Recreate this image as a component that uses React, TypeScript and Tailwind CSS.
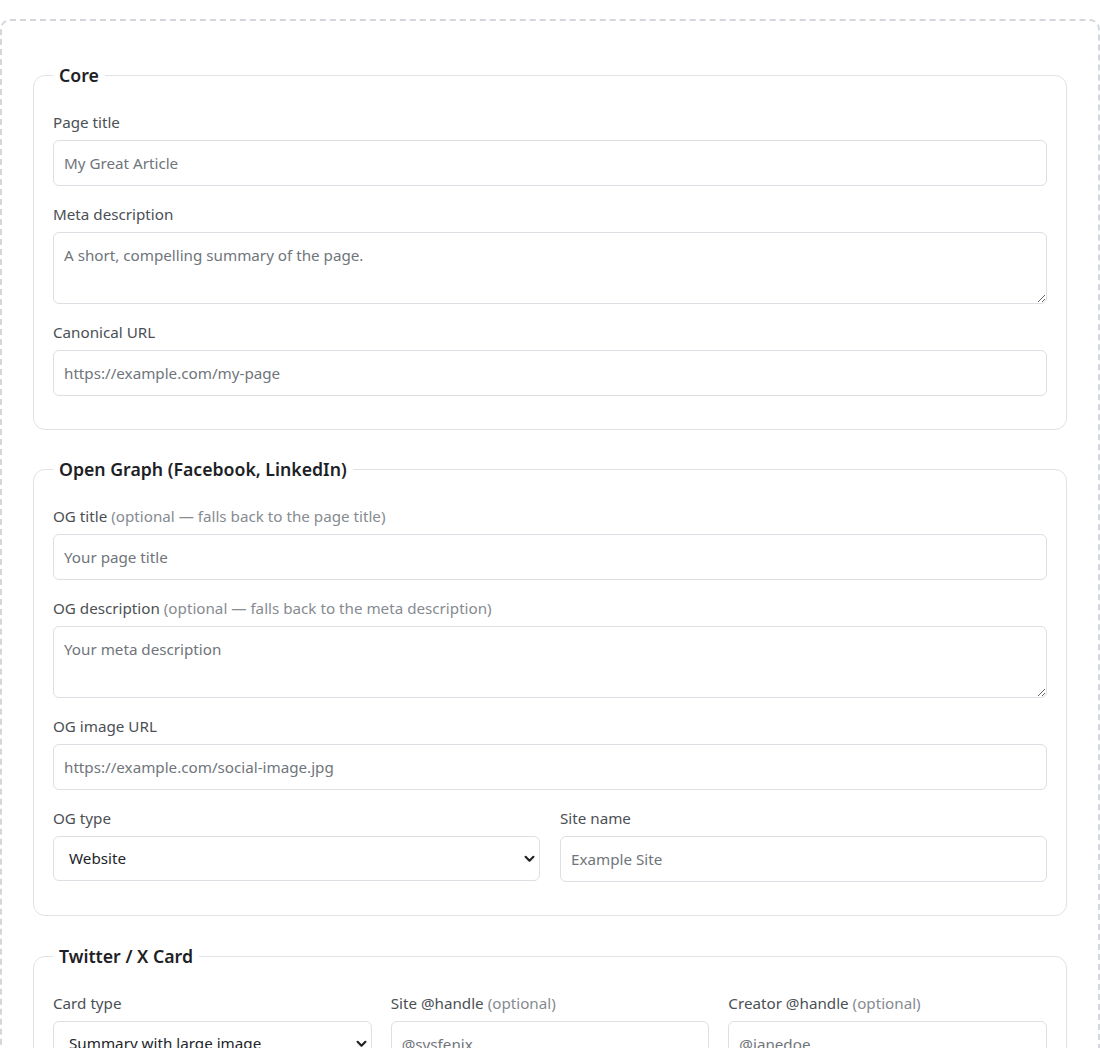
import React from "react";

const font = { fontFamily: '"Noto Sans", "Open Sans", sans-serif' };

function Label({ text, hint }: { text: string; hint?: string }) {
  return (
    <label className="block text-[15.2px] leading-[20px] text-[#4b5055] mb-[8px]">
      {text}
      {hint ? <span className="text-[#868b91]"> {hint}</span> : null}
    </label>
  );
}

function TextInput({ placeholder }: { placeholder: string }) {
  return (
    <input
      type="text"
      placeholder={placeholder}
      className="block w-full h-[46px] rounded-[6px] border border-[#dcdfe3] bg-white px-[10px] text-[15.2px] text-[#212529] placeholder:text-[#6f757b] outline-none"
    />
  );
}

function TextArea({ placeholder }: { placeholder: string }) {
  return (
    <textarea
      placeholder={placeholder}
      className="block w-full h-[72px] rounded-[6px] border border-[#dcdfe3] bg-white px-[10px] py-[11px] text-[15.2px] leading-[22px] text-[#212529] placeholder:text-[#6f757b] outline-none resize-y"
    />
  );
}

function Select({ value, options }: { value: string; options: string[] }) {
  return (
    <div className="relative">
      <select
        defaultValue={value}
        className="block w-full h-[45px] appearance-none rounded-[6px] border border-[#dcdfe3] bg-white pl-[15px] pr-[36px] text-[15.2px] text-[#212529] outline-none"
      >
        {options.map((o) => (
          <option key={o}>{o}</option>
        ))}
      </select>
      <svg
        className="pointer-events-none absolute right-[5px] top-1/2 -translate-y-1/2"
        width="11"
        height="8"
        viewBox="0 0 11 8"
        fill="none"
      >
        <path d="M1.6 1.8 L5.5 5.7 L9.4 1.8" stroke="#222" strokeWidth="2.2" strokeLinecap="round" strokeLinejoin="round" />
      </svg>
    </div>
  );
}

function Field({ children }: { children: React.ReactNode }) {
  return <div>{children}</div>;
}

function Section({ title, children, extra }: { title: string; children: React.ReactNode; extra?: string }) {
  return (
    <fieldset className={"rounded-[12px] border border-[#dfe2e6] px-[19px] pt-[25px] pb-[33px] " + (extra ?? "")}>
      <legend className="ml-0 px-[6px] text-[17.7px] leading-[24px] font-semibold text-[#1d2125]">{title}</legend>
      <div className="flex flex-col gap-[18px]">{children}</div>
    </fieldset>
  );
}

export default function App() {
  return (
    <div className="min-h-screen bg-white" style={font}>
      <div className="pt-[19px]">
        <div className="rounded-[10px] border-2 border-dashed border-[#d3d6da] px-[31px] pt-[42px] pb-[40px] flex flex-col gap-[27px]">
          <Section title="Core">
            <Field>
              <Label text="Page title" />
              <TextInput placeholder="My Great Article" />
            </Field>
            <Field>
              <Label text="Meta description" />
              <TextArea placeholder="A short, compelling summary of the page." />
            </Field>
            <Field>
              <Label text="Canonical URL" />
              <TextInput placeholder="https://example.com/my-page" />
            </Field>
          </Section>

          <Section title="Open Graph (Facebook, LinkedIn)">
            <Field>
              <Label text="OG title" hint="(optional — falls back to the page title)" />
              <TextInput placeholder="Your page title" />
            </Field>
            <Field>
              <Label text="OG description" hint="(optional — falls back to the meta description)" />
              <TextArea placeholder="Your meta description" />
            </Field>
            <Field>
              <Label text="OG image URL" />
              <TextInput placeholder="https://example.com/social-image.jpg" />
            </Field>
            <div className="grid grid-cols-2 gap-[20px]">
              <Field>
                <Label text="OG type" />
                <Select value="Website" options={["Website", "Article", "Product", "Profile"]} />
              </Field>
              <Field>
                <Label text="Site name" />
                <TextInput placeholder="Example Site" />
              </Field>
            </div>
          </Section>

          <Section title="Twitter / X Card" extra="mt-[1px]">
            <div className="grid grid-cols-3 gap-[19px]">
              <Field>
                <Label text="Card type" />
                <Select value="Summary with large image" options={["Summary", "Summary with large image"]} />
              </Field>
              <Field>
                <Label text="Site @handle" hint="(optional)" />
                <TextInput placeholder="@sysfenix" />
              </Field>
              <Field>
                <Label text="Creator @handle" hint="(optional)" />
                <TextInput placeholder="@janedoe" />
              </Field>
            </div>
            <Field>
              <Label text="Twitter title" hint="(optional)" />
              <TextInput placeholder="Your page title" />
            </Field>
          </Section>
        </div>
      </div>
    </div>
  );
}
